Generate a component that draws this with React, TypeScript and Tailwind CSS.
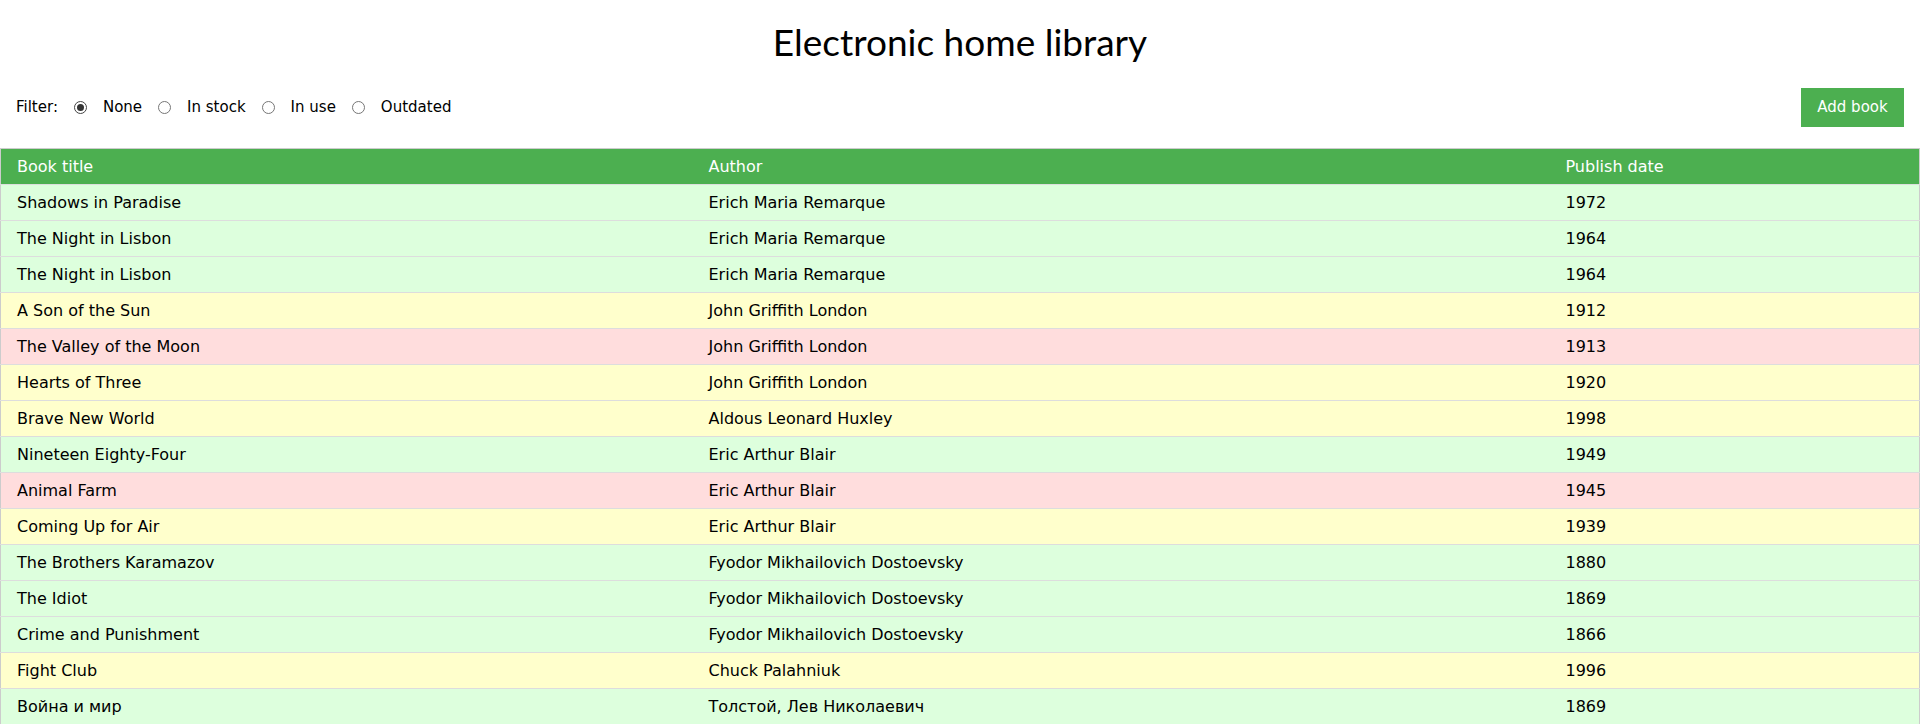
type Book = {
  title: string;
  author: string;
  year: number;
  status: 'stock' | 'use' | 'outdated';
};

const books: Book[] = [
  { title: 'Shadows in Paradise', author: 'Erich Maria Remarque', year: 1972, status: 'stock' },
  { title: 'The Night in Lisbon', author: 'Erich Maria Remarque', year: 1964, status: 'stock' },
  { title: 'The Night in Lisbon', author: 'Erich Maria Remarque', year: 1964, status: 'stock' },
  { title: 'A Son of the Sun', author: 'John Griffith London', year: 1912, status: 'use' },
  { title: 'The Valley of the Moon', author: 'John Griffith London', year: 1913, status: 'outdated' },
  { title: 'Hearts of Three', author: 'John Griffith London', year: 1920, status: 'use' },
  { title: 'Brave New World', author: 'Aldous Leonard Huxley', year: 1998, status: 'use' },
  { title: 'Nineteen Eighty-Four', author: 'Eric Arthur Blair', year: 1949, status: 'stock' },
  { title: 'Animal Farm', author: 'Eric Arthur Blair', year: 1945, status: 'outdated' },
  { title: 'Coming Up for Air', author: 'Eric Arthur Blair', year: 1939, status: 'use' },
  { title: 'The Brothers Karamazov', author: 'Fyodor Mikhailovich Dostoevsky', year: 1880, status: 'stock' },
  { title: 'The Idiot', author: 'Fyodor Mikhailovich Dostoevsky', year: 1869, status: 'stock' },
  { title: 'Crime and Punishment', author: 'Fyodor Mikhailovich Dostoevsky', year: 1866, status: 'stock' },
  { title: 'Fight Club', author: 'Chuck Palahniuk', year: 1996, status: 'use' },
  { title: 'Война и мир', author: 'Толстой, Лев Николаевич', year: 1869, status: 'stock' },
];

const rowColor = {
  stock: 'bg-[#ddffdd]',
  use: 'bg-[#ffffcc]',
  outdated: 'bg-[#ffdddd]',
};

function Radio({ checked, label }: { checked?: boolean; label: string }) {
  return (
    <label className="flex items-center gap-4 cursor-pointer">
      <span
        className={`w-[13px] h-[13px] rounded-full border bg-white flex items-center justify-center ${
          checked ? 'border-[#444]' : 'border-[#767676]'
        }`}
      >
        {checked && <span className="w-[7px] h-[7px] rounded-full bg-[#333]" />}
      </span>
      <span>{label}</span>
    </label>
  );
}

export default function App() {
  return (
    <div className="min-h-screen bg-white text-black font-['DejaVu_Sans',sans-serif]">
      <h1 className="pt-[18px] text-center text-[37px] leading-[47px] font-normal font-['Lato',sans-serif]">
        Electronic home library
      </h1>

      {/* Filter + add button */}
      <div className="mt-[23px] flex items-center justify-between pl-[16px] pr-4">
        <div className="flex items-center gap-4 text-[15px]">
          <span>Filter:</span>
          <Radio checked label="None" />
          <Radio label="In stock" />
          <Radio label="In use" />
          <Radio label="Outdated" />
        </div>
        <button className="w-[103px] h-[39px] bg-[#4caf50] text-white text-[15px]">Add book</button>
      </div>

      {/* Books table */}
      <table className="mt-[21px] w-full table-fixed border-collapse border border-[#ccc] text-[16px]">
        <colgroup>
          <col className="w-[692px]" />
          <col className="w-[857px]" />
          <col />
        </colgroup>
        <thead>
          <tr className="bg-[#4caf50] text-white border-b border-[#ddd]">
            <th className="h-[36px] px-4 py-0 text-left font-normal">Book title</th>
            <th className="h-[36px] px-4 py-0 text-left font-normal">Author</th>
            <th className="h-[36px] px-4 py-0 text-left font-normal">Publish date</th>
          </tr>
        </thead>
        <tbody>
          {books.map((b, i) => (
            <tr key={i} className={`${rowColor[b.status]} border-b border-[#ddd]`}>
              <td className="h-[36px] px-4 py-0">{b.title}</td>
              <td className="h-[36px] px-4 py-0">{b.author}</td>
              <td className="h-[36px] px-4 py-0">{b.year}</td>
            </tr>
          ))}
        </tbody>
      </table>
    </div>
  );
}
